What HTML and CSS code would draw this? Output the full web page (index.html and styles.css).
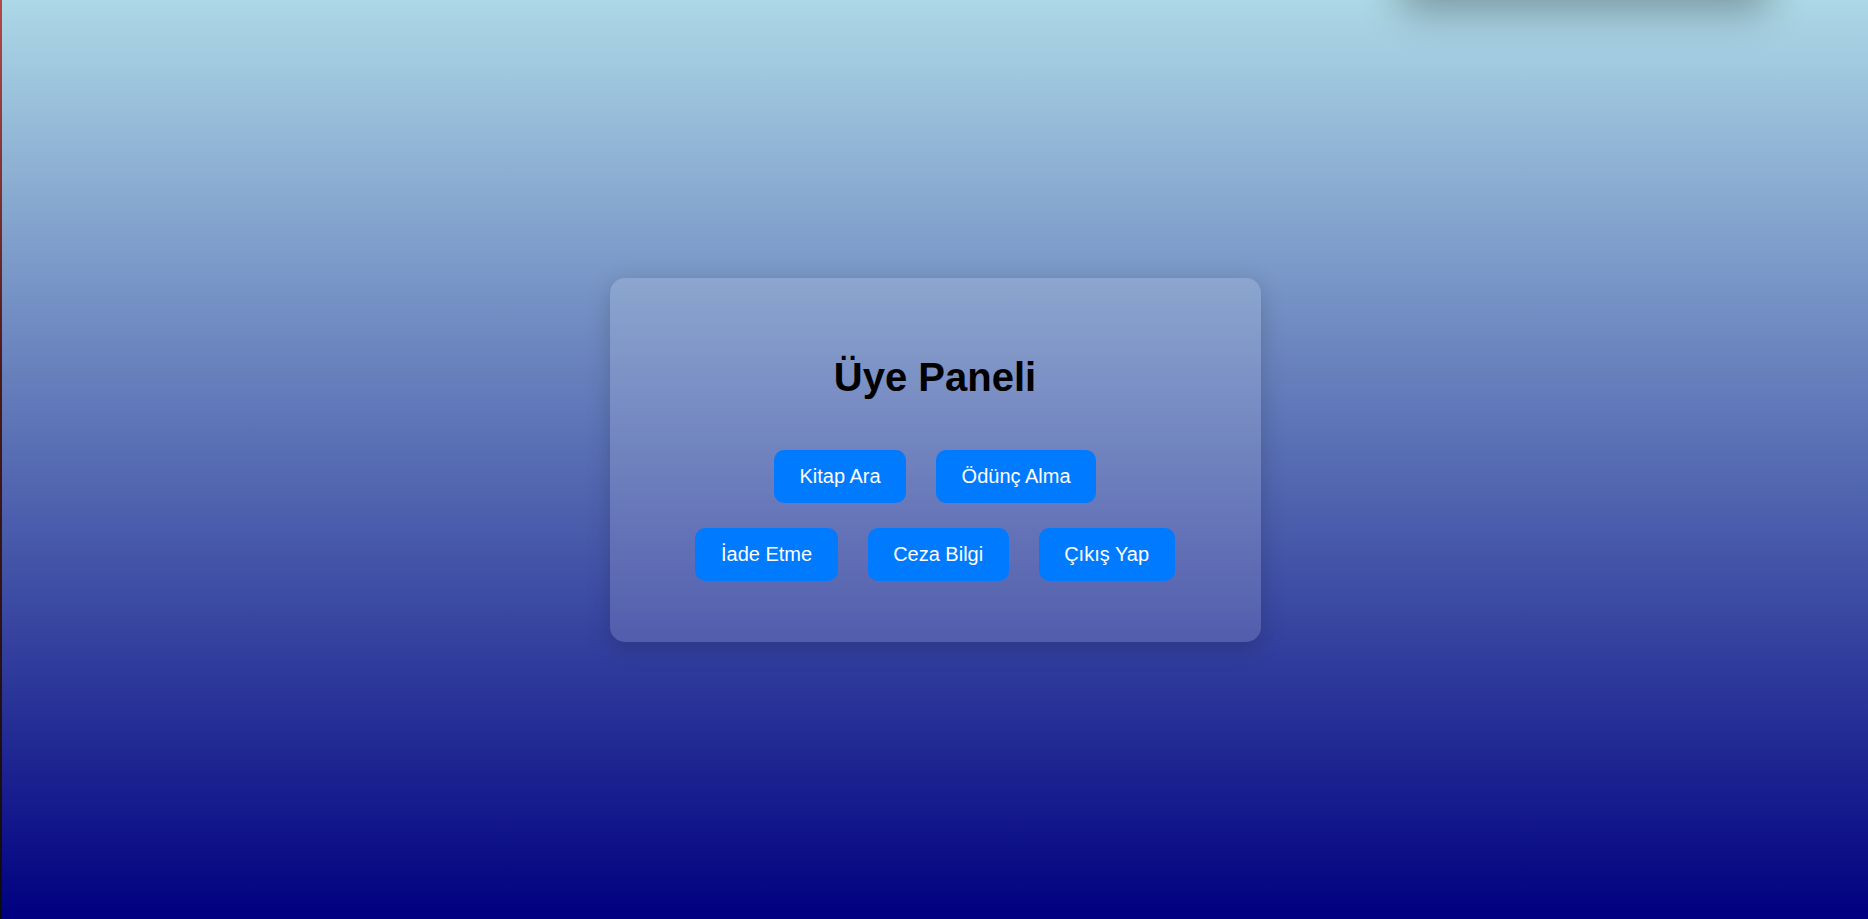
FILE: index.html
```html
<!DOCTYPE html>
<html lang="tr">
<head>
<meta charset="utf-8">
<title>Üye Paneli</title>
<link rel="stylesheet" href="styles.css">
</head>
<body>
<div class="edge"></div>
<div class="toast"></div>
<main class="stage">
  <section class="panel">
    <h1 class="panel-title">Üye Paneli</h1>
    <div class="actions">
      <div class="row">
        <button class="btn">Kitap Ara</button>
        <button class="btn">Ödünç Alma</button>
      </div>
      <div class="row">
        <button class="btn">İade Etme</button>
        <button class="btn">Ceza Bilgi</button>
        <button class="btn">Çıkış Yap</button>
      </div>
    </div>
  </section>
</main>
</body>
</html>
```
FILE: styles.css
```css
html, body {
  margin: 0;
  height: 100%;
  overflow: hidden;
}
body {
  font-family: "Liberation Sans", Arial, sans-serif;
  background: linear-gradient(to bottom, #add8e6 0%, #000080 100%);
  display: flex;
}
.edge {
  width: 2px;
  flex: 0 0 2px;
  height: 100%;
  background: linear-gradient(to bottom, #b64848 0%, #4a1a1a 40%, #0b0b0b 100%);
}
.toast {
  position: absolute;
  top: -50px;
  left: 1400px;
  width: 368px;
  height: 50px;
  border-radius: 8px;
  box-shadow: 0 10px 40px rgba(0, 0, 0, 0.32);
}
.stage {
  flex: 1;
  display: flex;
  align-items: center;
  justify-content: center;
}
.panel {
  width: 651px;
  box-sizing: border-box;
  padding: 76px 0 61px;
  background: rgba(255, 255, 255, 0.15);
  border-radius: 15px;
  box-shadow: 0 6px 24px rgba(0, 0, 0, 0.18);
  text-align: center;
}
.panel-title {
  margin: 0 0 50px;
  font-size: 40px;
  font-weight: bold;
  line-height: 46px;
  color: #000;
}
.actions {
  display: flex;
  flex-direction: column;
  gap: 25px;
}
.row {
  display: flex;
  justify-content: center;
  gap: 30px;
}
.btn {
  font-family: "Liberation Sans", Arial, sans-serif;
  font-size: 20px;
  line-height: 23px;
  padding: 15px 25.5px;
  color: #fff;
  background: #007bff;
  border: none;
  border-radius: 10px;
  cursor: pointer;
}
```
